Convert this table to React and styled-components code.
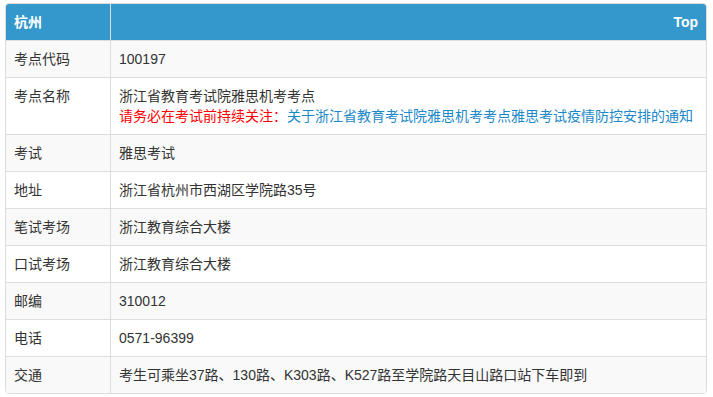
import React from "react";
import styled, { createGlobalStyle } from "styled-components";

const Global = createGlobalStyle`
  html, body { margin: 0; padding: 0; background: #fff; }
  body {
    font-family: "Liberation Sans", Arial, "Noto Sans CJK SC", sans-serif;
    font-size: 14px;
    color: #333;
  }
`;

const Page = styled.div`
  padding: 3px 6px 4px 5px;
`;

const Table = styled.table`
  width: 100%;
  border-collapse: separate;
  border-spacing: 0;
  border: 1px solid #ddd;
  border-radius: 4px;
  line-height: 20px;
`;

const HeadCell = styled.th`
  background: #3498cc;
  color: #fff;
  font-weight: bold;
  padding: 8px;
  text-align: ${(p) => (p.$right ? "right" : "left")};
  border-left: ${(p) => (p.$first ? "none" : "1px solid #ddd")};
  border-top-left-radius: ${(p) => (p.$first ? "3px" : "0")};
  border-top-right-radius: ${(p) => (p.$right ? "3px" : "0")};
`;

const Row = styled.tr`
  background: ${(p) => (p.$striped ? "#f9f9f9" : "#fff")};
`;

const Cell = styled.td`
  padding: 8px;
  vertical-align: top;
  border-top: 1px solid #ddd;
  border-left: ${(p) => (p.$first ? "none" : "1px solid #ddd")};
  width: ${(p) => (p.$first ? "88px" : "auto")};
`;

const Warn = styled.span`
  color: #ff0000;
`;

const Link = styled.a`
  color: #1a88c9;
  text-decoration: none;
`;

const rows = [
  ["考点代码", "100197"],
  ["考点名称", null],
  ["考试", "雅思考试"],
  ["地址", "浙江省杭州市西湖区学院路35号"],
  ["笔试考场", "浙江教育综合大楼"],
  ["口试考场", "浙江教育综合大楼"],
  ["邮编", "310012"],
  ["电话", "0571-96399"],
  ["交通", "考生可乘坐37路、130路、K303路、K527路至学院路天目山路口站下车即到"],
];

export default function App() {
  return (
    <Page>
      <Global />
      <Table>
        <thead>
          <tr>
            <HeadCell $first>杭州</HeadCell>
            <HeadCell $right>Top</HeadCell>
          </tr>
        </thead>
        <tbody>
          {rows.map(([label, value], i) => (
            <Row key={label} $striped={i % 2 === 0}>
              <Cell $first>{label}</Cell>
              <Cell>
                {value ?? (
                  <>
                    浙江省教育考试院雅思机考考点
                    <br />
                    <Warn>请务必在考试前持续关注：</Warn>
                    <Link href="#">关于浙江省教育考试院雅思机考考点雅思考试疫情防控安排的通知</Link>
                  </>
                )}
              </Cell>
            </Row>
          ))}
        </tbody>
      </Table>
    </Page>
  );
}
